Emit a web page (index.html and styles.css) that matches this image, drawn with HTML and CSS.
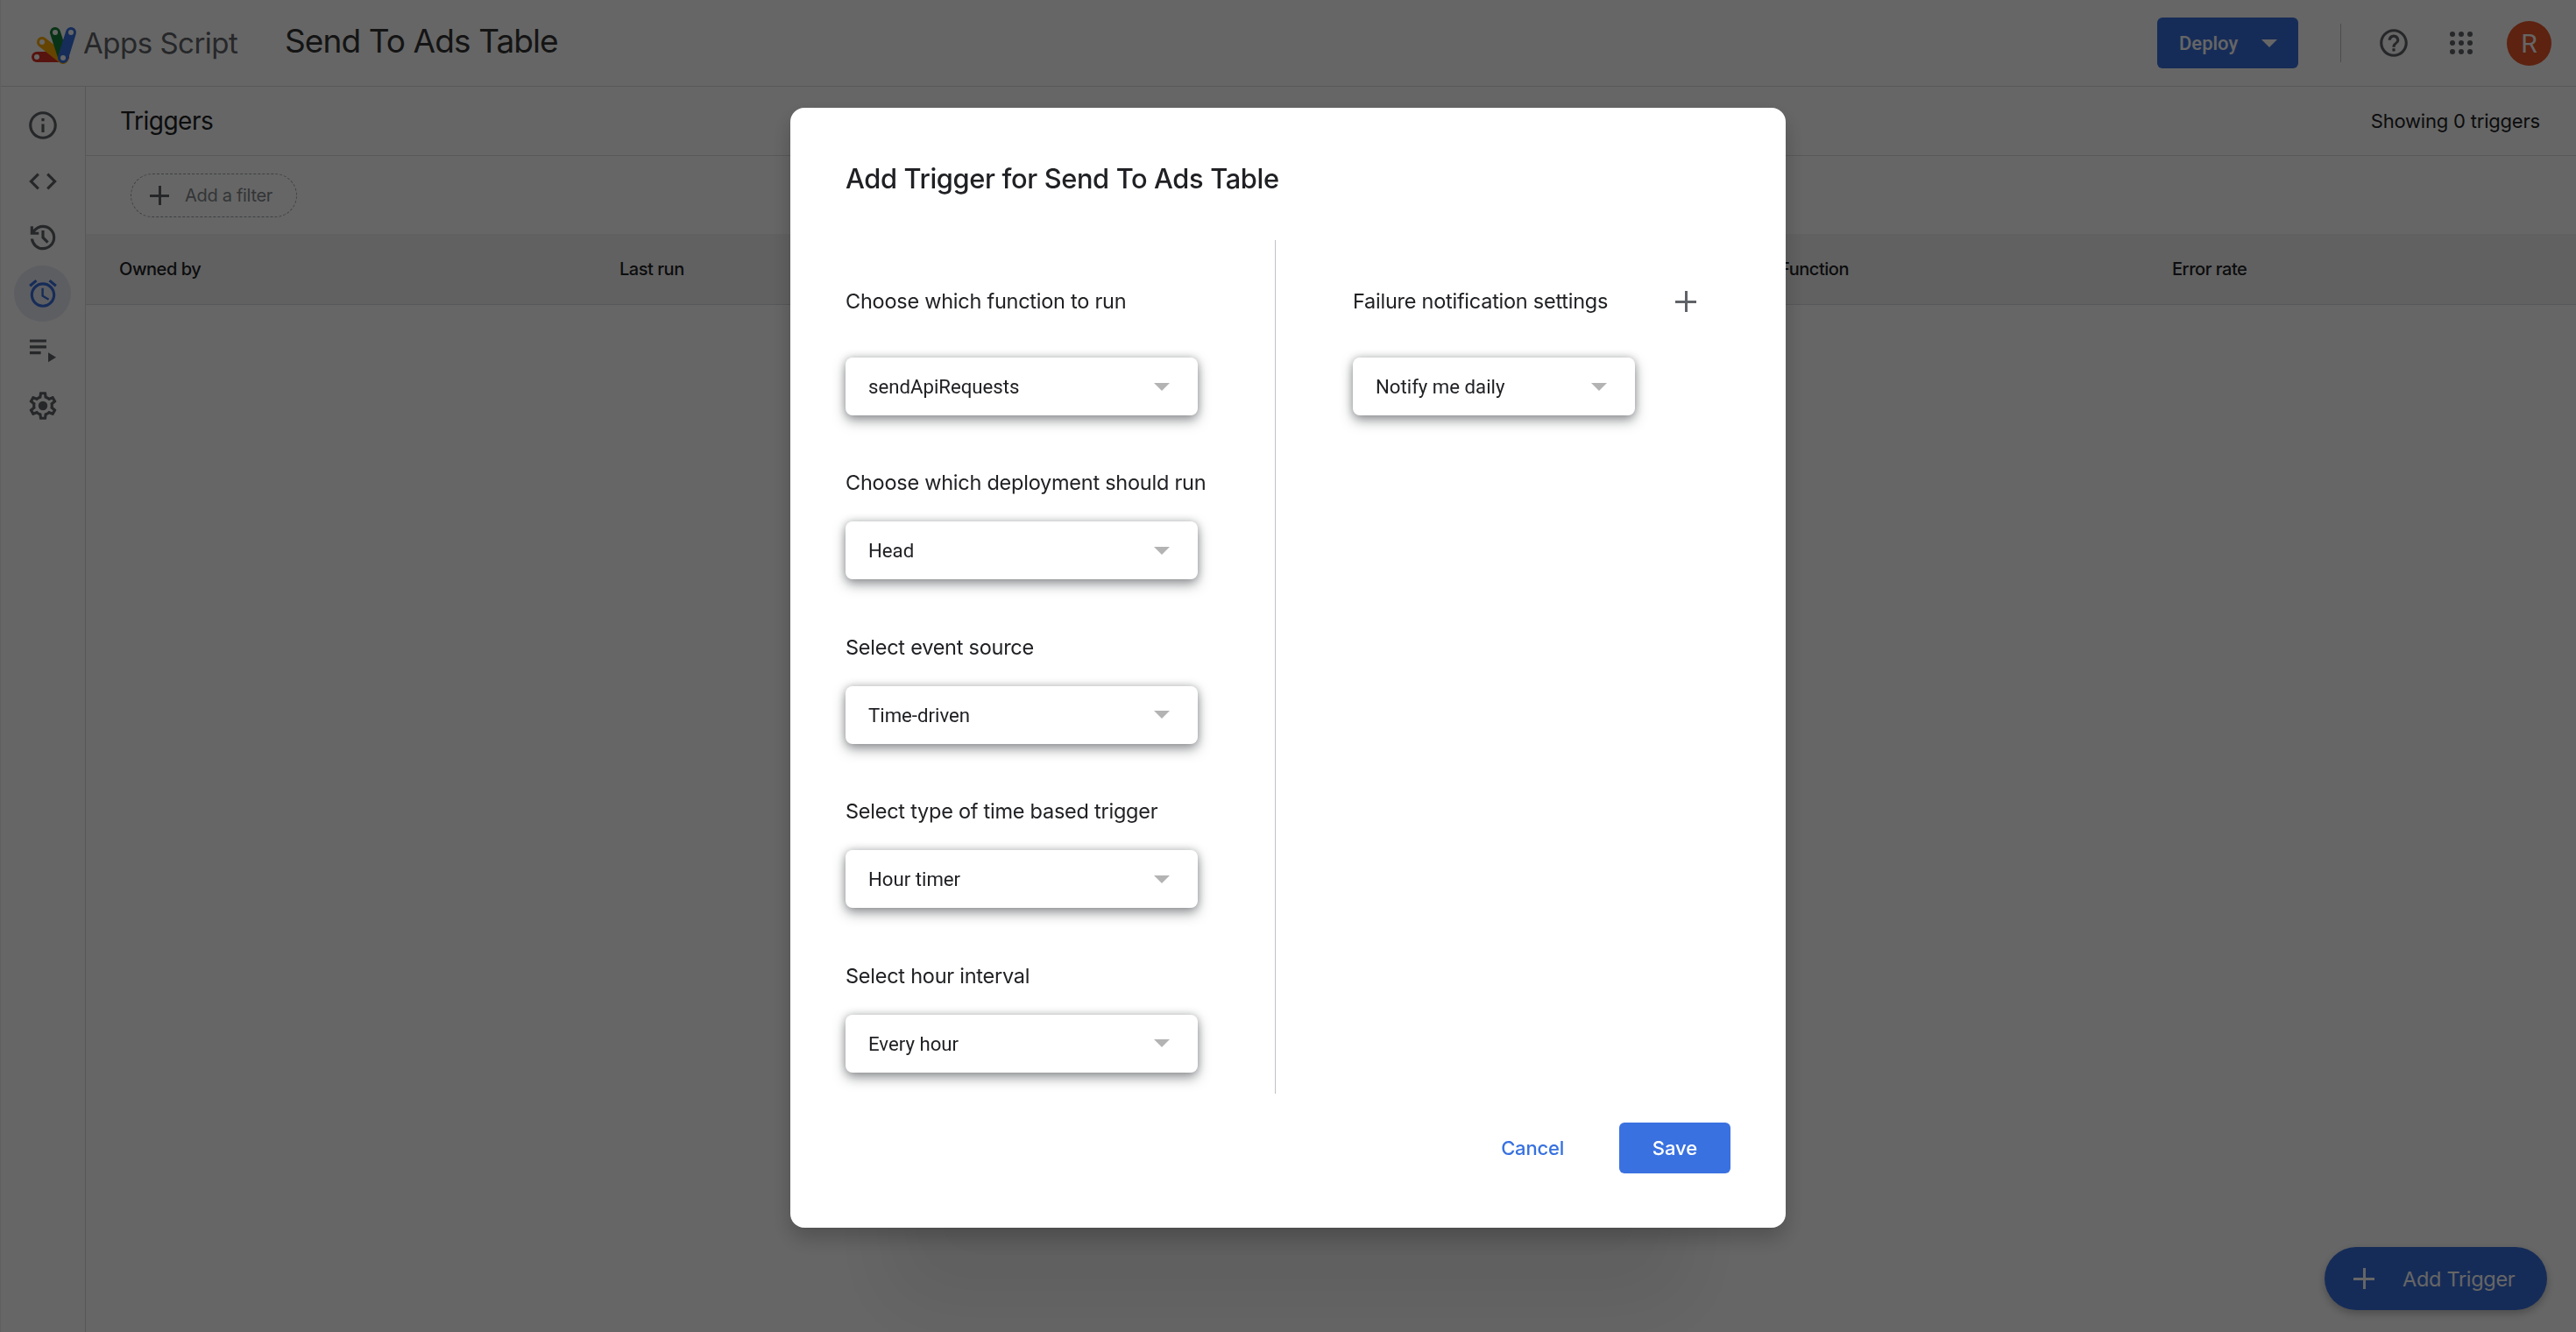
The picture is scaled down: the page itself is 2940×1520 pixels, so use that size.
FILE: index.html
```html
<!DOCTYPE html>
<html lang="en">
<head>
<meta charset="utf-8">
<title>Send To Ads Table - Triggers</title>
<link rel="stylesheet" href="styles.css">
</head>
<body>
<div class="app">
  <header class="topbar">
    <svg class="logo" viewBox="0 0 52 41" aria-hidden="true">
      <path class="logo-red" d="M7 34H38"/>
      <path class="logo-yellow" d="M13 17L37 36"/>
      <path class="logo-green" d="M28 6L37 34"/>
      <path class="logo-blue" d="M46 6L37 35"/>
      <circle class="logo-hole" cx="7" cy="34" r="3"/>
      <circle class="logo-hole" cx="13" cy="17" r="3"/>
      <circle class="logo-hole" cx="28" cy="6" r="3"/>
      <circle class="logo-hole" cx="46" cy="6" r="3"/>
      <circle class="logo-hole" cx="37" cy="35" r="3"/>
    </svg>
    <span class="brand">Apps Script</span>
    <h1 class="project">Send To Ads Table</h1>
    <div class="top-actions">
      <button class="deploy">Deploy<span class="caret caret-light"></span></button>
      <span class="top-divider"></span>
      <svg class="top-icon help" viewBox="0 0 24 24"><path d="M11 18h2v-2h-2v2zm1-16C6.480 2 2 6.480 2 12s4.480 10 10 10 10-4.480 10-10S17.520 2 12 2zm0 18c-4.410 0-8-3.590-8-8s3.590-8 8-8 8 3.590 8 8-3.590 8-8 8zm0-14c-2.210 0-4 1.790-4 4h2c0-1.100.9-2 2-2s2 .9 2 2c0 2-3 1.750-3 5h2c0-2.250 3-2.500 3-5 0-2.210-1.790-4-4-4z"/></svg>
      <svg class="top-icon apps" viewBox="0 0 26 26">
        <circle cx="3" cy="3" r="3"/><circle cx="13" cy="3" r="3"/><circle cx="23" cy="3" r="3"/>
        <circle cx="3" cy="13" r="3"/><circle cx="13" cy="13" r="3"/><circle cx="23" cy="13" r="3"/>
        <circle cx="3" cy="23" r="3"/><circle cx="13" cy="23" r="3"/><circle cx="23" cy="23" r="3"/>
      </svg>
      <span class="avatar">R</span>
    </div>
  </header>
  <div class="body">
    <nav class="sidebar">
      <div class="nav-item"><svg viewBox="0 0 24 24"><path d="M11 7h2v2h-2zm0 4h2v6h-2zm1-9C6.480 2 2 6.480 2 12s4.480 10 10 10 10-4.480 10-10S17.520 2 12 2zm0 18c-4.410 0-8-3.590-8-8s3.590-8 8-8 8 3.590 8 8-3.590 8-8 8z"/></svg></div>
      <div class="nav-item"><svg viewBox="0 0 24 24"><path d="M9.400 16.600L4.800 12l4.600-4.600L8 6l-6 6 6 6 1.400-1.400zm5.200 0l4.600-4.600-4.600-4.600L16 6l6 6-6 6-1.400-1.400z"/></svg></div>
      <div class="nav-item"><svg viewBox="0 0 24 24"><path d="M12 21q-3.450 0-6.012-2.288T3.050 13H5.100q.35 2.600 2.313 4.300T12 19q2.925 0 4.963-2.037T19 12q0-2.925-2.037-4.963T12 5q-1.725 0-3.225.8T6.250 8H9v2H3V4h2v2.350q1.275-1.600 3.113-2.475T12 3q3.750 0 6.375 2.625T21 12q0 3.750-2.625 6.375T12 21Zm2.800-4.800L11 12.400V7h2v4.600l3.200 3.200-1.400 1.400Z"/></svg></div>
      <div class="nav-item active"><svg viewBox="0 0 24 24"><path d="M22 5.720l-4.600-3.860-1.290 1.530 4.600 3.860L22 5.720zM7.880 3.390L6.600 1.860 2 5.710l1.290 1.530 4.590-3.850zM12.500 8H11v6l4.750 2.850.75-1.230-4-2.370V8zM12 4c-4.970 0-9 4.030-9 9s4.030 9 9 9 9-4.030 9-9-4.030-9-9-9zm0 16c-3.870 0-7-3.130-7-7s3.130-7 7-7 7 3.130 7 7-3.130 7-7 7z"/></svg></div>
      <div class="nav-item"><svg viewBox="0 0 24 24"><path d="M2.500 4.700h12v2h-12zM2.500 9h12v2h-12zM2.500 13.300h8v2h-8zM15.800 14l5.700 3.500-5.700 3.500z"/></svg></div>
      <div class="nav-item"><svg viewBox="0 0 24 24"><path fill-rule="evenodd" d="M19.430 12.980c.04-.32.07-.64.07-.98s-.03-.66-.07-.98l2.110-1.650c.19-.15.24-.42.12-.64l-2-3.460c-.12-.22-.39-.3-.61-.22l-2.490 1c-.52-.4-1.080-.73-1.690-.98l-.38-2.650C14.460 2.180 14.250 2 14 2h-4c-.25 0-.46.18-.49.42l-.38 2.650c-.61.25-1.170.59-1.690.98l-2.490-1c-.23-.09-.49 0-.61.22l-2 3.460c-.13.22-.07.49.12.64l2.110 1.650c-.04.32-.07.65-.07.98s.03.66.07.98l-2.110 1.650c-.19.15-.24.42-.12.64l2 3.460c.12.22.39.3.61.22l2.490-1c.52.4 1.080.73 1.690.98l.38 2.650c.03.24.24.42.49.42h4c.25 0 .46-.18.49-.42l.38-2.650c.61-.25 1.170-.59 1.690-.98l2.490 1c.23.09.49 0 .61-.22l2-3.460c.12-.22.07-.49-.12-.64l-2.110-1.650zM17.450 11.270c.04.31.05.52.05.73 0 .21-.02.43-.05.73l-.14 1.130.89.7 1.080.84-.7 1.210-1.270-.51-1.040-.42-.9.68c-.43.32-.84.56-1.250.73l-1.060.43-.16 1.130-.2 1.350h-1.400l-.19-1.350-.16-1.130-1.060-.43c-.43-.18-.83-.41-1.230-.71l-.91-.7-1.060.43-1.270.51-.7-1.210 1.080-.84.89-.7-.14-1.130c-.03-.31-.05-.54-.05-.74s.02-.43.05-.73l.14-1.130-.89-.7-1.080-.84.7-1.210 1.270.51 1.040.42.9-.68c.43-.32.84-.56 1.250-.73l1.060-.43.16-1.130.2-1.350h1.390l.19 1.350.16 1.130 1.060.43c.43.18.83.41 1.230.71l.91.7 1.060-.43 1.270-.51.7 1.210-1.070.85-.89.7.14 1.130z"/><circle cx="12" cy="12" r="3.300"/></svg></div>
    </nav>
    <main class="content">
      <div class="content-head">
        <h2 class="content-title">Triggers</h2>
        <span class="count">Showing 0 triggers</span>
      </div>
      <div class="filter-row">
        <div class="chip"><span class="chip-plus"></span><span class="chip-text">Add a filter</span></div>
      </div>
      <div class="table-head">
        <span>Owned by</span>
        <span>Last run</span>
        <span>Function</span>
        <span>Error rate</span>
      </div>
    </main>
  </div>
  <button class="fab"><span class="plus plus-fab"></span>Add Trigger</button>
</div>

<div class="overlay">
  <section class="dialog">
    <h3 class="dialog-title">Add Trigger for Send To Ads Table</h3>
    <div class="dialog-cols">
      <div class="col-left">
        <div class="field first">
          <label class="field-label">Choose which function to run</label>
          <div class="select"><span>sendApiRequests</span><span class="caret"></span></div>
        </div>
        <div class="field">
          <label class="field-label">Choose which deployment should run</label>
          <div class="select"><span>Head</span><span class="caret"></span></div>
        </div>
        <div class="field">
          <label class="field-label">Select event source</label>
          <div class="select"><span>Time-driven</span><span class="caret"></span></div>
        </div>
        <div class="field">
          <label class="field-label">Select type of time based trigger</label>
          <div class="select"><span>Hour timer</span><span class="caret"></span></div>
        </div>
        <div class="field">
          <label class="field-label">Select hour interval</label>
          <div class="select"><span>Every hour</span><span class="caret"></span></div>
        </div>
      </div>
      <div class="col-right">
        <div class="field first">
          <div class="label-row">
            <label class="field-label">Failure notification settings</label>
            <span class="plus plus-dialog"></span>
          </div>
          <div class="select select-small"><span>Notify me daily</span><span class="caret"></span></div>
        </div>
      </div>
    </div>
    <div class="dialog-actions">
      <button class="btn-text">Cancel</button>
      <button class="btn-primary">Save</button>
    </div>
  </section>
</div>
</body>
</html>
```
FILE: styles.css
```css
* { box-sizing: border-box; }
html, body { margin: 0; height: 100%; }
body {
  background: #fff;
  color: #202124;
  font-family: "Inter", "Noto Sans", sans-serif;
  overflow: hidden;
}
button { font: inherit; border: 0; padding: 0; background: none; }
h1, h2, h3 { margin: 0; font-weight: 400; }

.app { height: 1520px; display: flex; flex-direction: column; position: relative; border-left: 1px solid #eee; }

/* Top bar */
.topbar {
  height: 99px;
  flex: none;
  display: flex;
  align-items: center;
  border-bottom: 1px solid #dadce0;
  padding-left: 34px;
}
.logo { width: 52px; height: 41px; margin-top: 4px; flex: none; overflow: visible; fill: none; stroke-width: 12; stroke-linecap: round; }
.logo-red { stroke: #d93025; }
.logo-yellow { stroke: #f9ab00; }
.logo-green { stroke: #188038; }
.logo-blue { stroke: #3771e0; }
.logo-hole { fill: #fff; stroke: none; }
.brand { font-size: 33px; color: #5f6368; margin-left: 8px; width: 228px; letter-spacing: -.5px; }
.project { font-size: 37px; color: #333; letter-spacing: -.9px; margin-top: -6px; margin-left: 2px; }
.top-actions { margin-left: auto; display: flex; align-items: center; padding-right: 28px; }
.deploy {
  width: 161px; height: 58px;
  background: #376edc; color: #fff;
  border-radius: 6px;
  font: 500 22px "Roboto", sans-serif;
  display: flex; align-items: center;
  padding-left: 25px; gap: 27px;
}
.top-divider { width: 1px; height: 44px; background: #bdc1c6; margin: 0 41px 0 48px; }
.top-icon { fill: #5f6368; flex: none; }
.help { width: 38px; height: 38px; }
.apps { width: 26px; height: 26px; margin-left: 45px; fill: #5f6368; }
.avatar {
  width: 51px; height: 51px; border-radius: 50%;
  background: #e8552a; color: #fff;
  display: flex; align-items: center; justify-content: center;
  font: 400 30px "Roboto", sans-serif;
  margin-left: 39px;
}

.body { flex: 1; display: flex; min-height: 0; }

/* Sidebar */
.sidebar {
  width: 97px; flex: none;
  border-right: 1px solid #dadce0;
  padding: 12px 0 0 15px;
  display: flex; flex-direction: column;
}
.nav-item { width: 65px; height: 64px; border-radius: 32px; display: flex; align-items: center; justify-content: center; }
.nav-item svg { width: 38px; height: 38px; fill: #5f6368; }
.nav-item.active { background: #e8eaf6; }
.nav-item.active svg { fill: #376edc; }

/* Content */
.content { flex: 1; min-width: 0; display: flex; flex-direction: column; }
.content-head {
  height: 79px; flex: none;
  display: flex; align-items: center; justify-content: space-between;
  padding: 0 41px 0 39px;
  border-bottom: 1px solid #dadce0;
}
.content-title { font-size: 28px; letter-spacing: -.5px; }
.count { font-size: 22px; letter-spacing: -.2px; }
.filter-row { height: 89px; flex: none; padding: 20px 0 0 51px; }
.chip {
  width: 190px; height: 50px;
  border: 1px dashed #9aa0a6; border-radius: 25px;
  display: flex; align-items: center;
  padding-left: 21px;
  color: #80868b; font-size: 20px;
}
.chip-plus, .plus { position: relative; display: block; flex: none; }
.chip-plus { width: 22px; height: 22px; margin-right: 18px; color: #5f6368; }
.chip-plus::before, .chip-plus::after, .plus::before, .plus::after { content: ""; position: absolute; background: currentColor; }
.chip-plus::before, .plus::before { left: 0; right: 0; top: 50%; height: 3px; margin-top: -1.500px; }
.chip-plus::after, .plus::after { top: 0; bottom: 0; left: 50%; width: 3px; margin-left: -1.500px; }
.chip-text { letter-spacing: -.3px; }
.table-head {
  height: 81px; flex: none;
  background: #f3f3f3;
  border-bottom: 1px solid #dadce0;
  display: grid;
  grid-template-columns: 571px 1324px 448px 1fr;
  align-items: center;
  padding-left: 38px;
  font-size: 20px;
  font-weight: 500;
  letter-spacing: -.45px;
}

.fab {
  position: absolute; right: 33px; bottom: 25px;
  width: 254px; height: 72px;
  border-radius: 36px;
  background: #376edc; color: #fff;
  display: flex; align-items: center;
  padding-left: 33px;
  font-size: 23.500px;
  box-shadow: 0 4px 10px rgba(0,0,0,.25);
  letter-spacing: -.3px;
}
.plus-fab { width: 24px; height: 24px; margin-right: 32px; }

/* Overlay and dialog */
.overlay {
  position: fixed; inset: 0;
  background: rgba(0,0,0,.6);
  display: flex; align-items: center; justify-content: center;
}
.dialog {
  width: 1136px; height: 1278px;
  margin-top: 4px;
  background: #fff;
  border-radius: 16px;
  padding: 0 62px 0 63px;
  display: flex; flex-direction: column;
  box-shadow: 0 12px 24px 0 rgba(0,0,0,.22), 0 200px 90px -110px rgba(0,0,0,.08);
}
.dialog-title {
  font-size: 30.800px; font-weight: 500;
  height: 151px; flex: none;
  padding-top: 62px;
  letter-spacing: -.35px;
}
.dialog-cols { height: 974px; flex: none; display: flex; }
.col-left { width: 491px; border-right: 1px solid #bdc1c6; flex: none; }
.col-right { padding-left: 88px; }
.field { height: 187.500px; padding-top: 61px; }
.field.first { height: 200px; padding-top: 54px; }
.field-label { display: block; font-size: 23.500px; line-height: 32px; height: 60px; letter-spacing: -.25px; white-space: nowrap; }
.field.first .field-label { height: 80px; }
.label-row { display: flex; width: 392px; }
.label-row .field-label { flex: 1; }
.select {
  width: 402px; height: 66px;
  border-radius: 8px;
  background: #fff;
  display: flex; align-items: center; justify-content: space-between;
  padding: 0 32px 0 26px;
  font: 400 22.200px "Roboto", sans-serif;
  box-shadow: 0 6px 14px rgba(60,64,67,.5), 0 0 8px rgba(60,64,67,.3);
}
.select-small { width: 322px; }
.caret { width: 0; height: 0; border-left: 9px solid transparent; border-right: 9px solid transparent; border-top: 9px solid #b3b3b3; flex: none; }
.caret-light { border-top-color: #fff; }
.plus-dialog { width: 24px; height: 24px; color: #5f6368; margin-top: 4px; }

.dialog-actions { flex: 1; display: flex; justify-content: flex-end; align-items: flex-start; padding-top: 33px; }
.btn-text { font-size: 22px; font-weight: 500; color: #3771e0; height: 58px; margin-right: 63px; letter-spacing: -.2px; }
.btn-primary { width: 127px; height: 58px; border-radius: 6px; background: #3a71e0; color: #fff; font-size: 22px; font-weight: 500; margin-right: 1px; }
```
